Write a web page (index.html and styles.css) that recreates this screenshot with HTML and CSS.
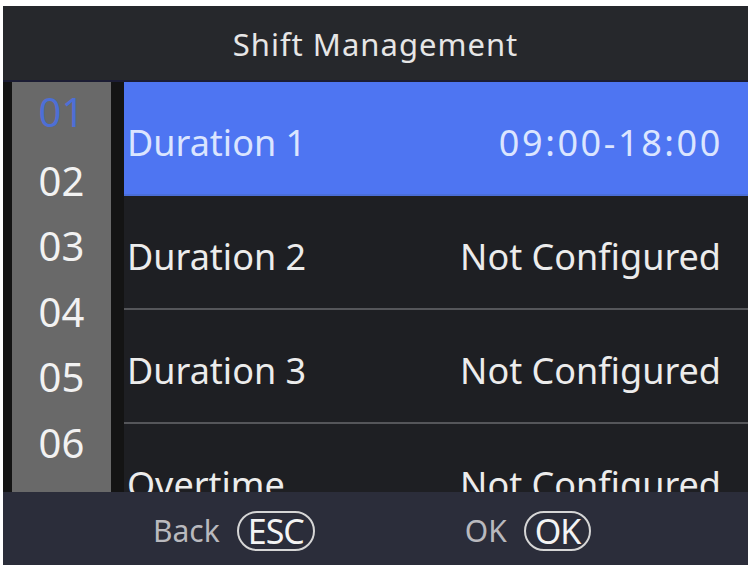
FILE: index.html
```html
<!DOCTYPE html>
<html lang="en">
<head>
    <meta charset="UTF-8">
    <meta name="viewport" content="width=device-width, initial-scale=1.0">
    <title>Shift Management</title>
    <link rel="stylesheet" href="styles.css">
</head>
<body>

<div class="screen">
    <header class="title-bar">Shift Management</header>

    <main class="content">
        <aside class="index-col">
            <div class="index-list">
                <div class="index-item current">01</div>
                <div class="index-item">02</div>
                <div class="index-item">03</div>
                <div class="index-item">04</div>
                <div class="index-item">05</div>
                <div class="index-item">06</div>
                <div class="index-item">07</div>
            </div>
        </aside>

        <ul class="rows">
            <li class="row selected">
                <span class="label">Duration 1</span>
                <span class="value time">09:00-18:00</span>
            </li>
            <li class="row">
                <span class="label">Duration 2</span>
                <span class="value">Not Configured</span>
            </li>
            <li class="row">
                <span class="label">Duration 3</span>
                <span class="value">Not Configured</span>
            </li>
            <li class="row">
                <span class="label">Overtime</span>
                <span class="value">Not Configured</span>
            </li>
        </ul>
    </main>

    <footer class="key-bar">
        <div class="key-hint">
            <span class="key-label">Back</span>
            <span class="key-pill">ESC</span>
        </div>
        <div class="key-hint">
            <span class="key-label">OK</span>
            <span class="key-pill">OK</span>
        </div>
    </footer>
</div>

</body>
</html>
```

FILE: styles.css
```css
/* Page around the device screen */
body {
    margin: 0;
    background: #ffffff;
    font-family: 'Noto Sans', 'Open Sans', sans-serif;
}

.screen {
    margin: 6px 3px 3px 3px;
    width: 745px;
    height: 559px;
    display: flex;
    flex-direction: column;
    background: #1e1f23;
    overflow: hidden;
}

/* Title */
.title-bar {
    height: 76px;
    flex-shrink: 0;
    display: flex;
    align-items: center;
    justify-content: center;
    background: #26282c;
    border-bottom: 2px solid #1c1d34;
    color: #e6e6e6;
    font-size: 31px;
    letter-spacing: 1px;
    padding-top: 2px;
    box-sizing: border-box;
}

/* Middle part: index column + rows */
.content {
    flex: 1;
    display: flex;
    overflow: hidden;
}

.index-col {
    width: 121px;
    flex-shrink: 0;
    padding: 0 13px 0 9px;
    box-sizing: border-box;
    background: #141414;
}

.index-list {
    height: 100%;
    background: #696969;
    overflow: hidden;
}

.index-item {
    height: 65.5px;
    line-height: 65.5px;
    text-align: center;
    font-size: 40px;
    color: #f2f2f2;
}

.index-item.current {
    color: #4d6fd6;
    line-height: 60px;
}

.rows {
    flex: 1;
    margin: 0;
    padding: 0;
    list-style: none;
}

.row {
    height: 114px;
    box-sizing: border-box;
    display: flex;
    align-items: center;
    justify-content: space-between;
    padding: 9px 27px 0 3px;
    border-bottom: 2px solid #55565a;
    color: #ececec;
    font-size: 36px;
}

.row.selected {
    background: #4e75f2;
    color: #dbe5ff;
    border-bottom-color: #4a6ed8;
}

.value.time {
    letter-spacing: 2.6px;
    margin-right: -2px;
}

/* Soft key hints */
.key-bar {
    height: 73px;
    flex-shrink: 0;
    display: flex;
    align-items: center;
    gap: 150px;
    padding: 4px 0 0 150px;
    box-sizing: border-box;
    background: #2b2d3a;
    color: #b9b9be;
}

.key-hint {
    display: flex;
    align-items: center;
    gap: 17px;
}

.key-label {
    font-size: 30px;
}

.key-pill {
    height: 40px;
    box-sizing: border-box;
    padding: 0 9px;
    display: flex;
    align-items: center;
    border: 2px solid #d6d6d6;
    border-radius: 20px;
    color: #f4f4f4;
    font-size: 34px;
    letter-spacing: -1px;
}
```
